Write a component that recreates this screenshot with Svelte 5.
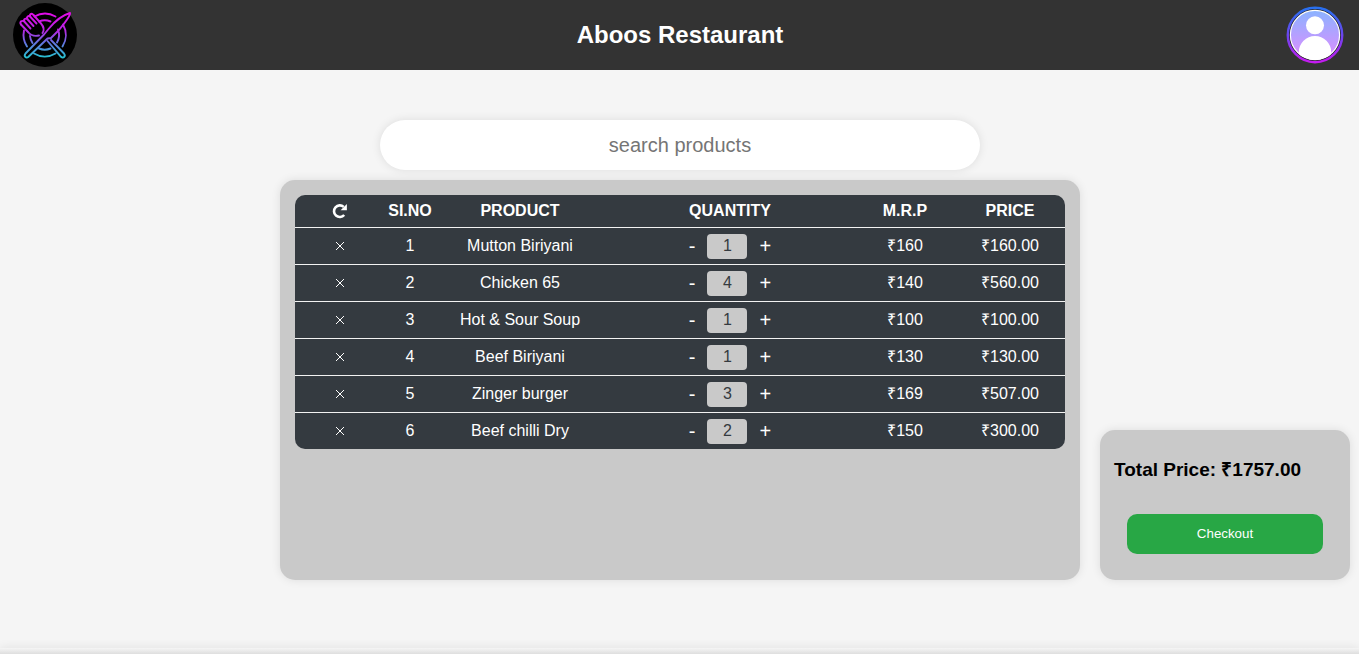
<script>
  let items = $state([
    { name: 'Mutton Biriyani', qty: 1, mrp: 160 },
    { name: 'Chicken 65', qty: 4, mrp: 140 },
    { name: 'Hot & Sour Soup', qty: 1, mrp: 100 },
    { name: 'Beef Biriyani', qty: 1, mrp: 130 },
    { name: 'Zinger burger', qty: 3, mrp: 169 },
    { name: 'Beef chilli Dry', qty: 2, mrp: 150 }
  ]);
  let total = $derived(items.reduce((sum, item) => sum + item.qty * item.mrp, 0));

  function remove(index) {
    items.splice(index, 1);
  }
  function change(item, step) {
    item.qty = Math.max(1, item.qty + step);
  }
</script>

<div class="page">
  <header>
    <svg class="logo" viewBox="0 0 64 64" aria-hidden="true">
      <defs>
        <linearGradient id="neon" gradientUnits="userSpaceOnUse" x1="0" y1="10" x2="0" y2="55">
          <stop offset="0" stop-color="#e00be8" />
          <stop offset="0.4" stop-color="#b528e2" />
          <stop offset="0.65" stop-color="#6670e0" />
          <stop offset="1" stop-color="#25c3cf" />
        </linearGradient>
      </defs>
      <circle cx="32" cy="32" r="32" fill="#000" />
      <g fill="none" stroke="url(#neon)" stroke-width="1.9" stroke-linecap="round" stroke-linejoin="round">
        <path d="M21.500 13.500A21.300 21.300 0 0 1 42.500 13.500" />
        <path d="M50 21.500A21.300 21.300 0 0 1 49.500 43.500" />
        <path d="M42.500 50.500A21.300 21.300 0 0 1 21 50.500" />
        <path d="M14 43.500A21.300 21.300 0 0 1 11 27.500" />
        <path d="M26 18.500A15 15 0 0 1 37.500 18.500" />
        <path d="M45 26.500A15 15 0 0 1 44 39.500" />
        <path d="M37.500 45.500A15 15 0 0 1 26 45.500" />
        <path d="M19.500 40A15 15 0 0 1 17 33" />
        <path d="M57 10C50 12 42 18 35.500 26L31 31.500L12.500 50.500C10.500 53 13 56 15.500 53.800L34.500 35.500L38 35L45 28C50 22 55.500 16 57 11Z" />
        <path d="M20.500 12L28 20.500C31 24 31.500 27 29.500 30" />
        <path d="M8 21.500L15.500 29.500C18 32.500 21.500 33.500 26 32.500" />
        <path d="M20.500 12C18.500 9.500 16 11.500 17.500 14L23.500 20.500M17.500 14C15.500 12 13 14 14.700 16.500L20.500 23M14.700 16.500C12.500 14.500 10 16.500 11.700 19L17.500 25.500M11.700 19C9 16.500 6 19 8 21.500" />
        <path d="M34.500 38L48 53.800C50.500 56 53 53 51 50.500L38 37" />
      </g>
    </svg>
    <h1>Aboos Restaurant</h1>
    <svg class="avatar" viewBox="0 0 58 58" aria-hidden="true">
      <defs>
        <linearGradient id="ring" x1="0" y1="0" x2="0" y2="1">
          <stop offset="0" stop-color="#2870ee" />
          <stop offset="0.5" stop-color="#6a45ee" />
          <stop offset="1" stop-color="#c41bf0" />
        </linearGradient>
        <linearGradient id="sky" x1="0" y1="0" x2="0" y2="1">
          <stop offset="0" stop-color="#8bb3ff" />
          <stop offset="1" stop-color="#e08cff" />
        </linearGradient>
        <clipPath id="disc"><circle cx="29" cy="29" r="25" /></clipPath>
      </defs>
      <circle cx="29" cy="29" r="27.200" fill="#222" stroke="url(#ring)" stroke-width="2.500" />
      <circle cx="29" cy="29" r="24.600" fill="url(#sky)" stroke="#fff" stroke-width="1.200" />
      <g fill="#fff" clip-path="url(#disc)">
        <circle cx="29" cy="19.300" r="9" />
        <path d="M12.800 58V46.300a16.200 16.200 0 0 1 32.400 0v12z" />
      </g>
    </svg>
  </header>

  <main>
    <input class="search" type="text" placeholder="search products" />
    <div class="content">
      <section class="cart">
        <table>
          <colgroup>
            <col class="c-remove" /><col class="c-no" /><col class="c-name" />
            <col class="c-qty" /><col class="c-mrp" /><col class="c-price" />
          </colgroup>
          <thead>
            <tr>
              <th>
                <svg class="reload" viewBox="0 0 16 16" aria-label="Reset">
                  <path d="M11.700 3.900A5.800 5.800 0 1 0 12.200 12" fill="none" stroke="#fff" stroke-width="2.600" />
                  <path d="M14.900 1v6.300H8.600z" fill="#fff" />
                </svg>
              </th>
              <th>SI.NO</th><th>PRODUCT</th><th>QUANTITY</th><th>M.R.P</th><th>PRICE</th>
            </tr>
          </thead>
          <tbody>
            {#each items as item, i}
              <tr>
                <td>
                  <button class="remove" aria-label="Remove" onclick={() => remove(i)}>
                    <svg viewBox="0 0 10 10"><path d="M1 1L9 9M9 1L1 9" stroke="#fff" stroke-width="1" /></svg>
                  </button>
                </td>
                <td>{i + 1}</td>
                <td>{item.name}</td>
                <td>
                  <div class="stepper">
                    <button onclick={() => change(item, -1)}>-</button>
                    <span class="count">{item.qty}</span>
                    <button onclick={() => change(item, 1)}>+</button>
                  </div>
                </td>
                <td>₹{item.mrp}</td>
                <td>₹{(item.qty * item.mrp).toFixed(2)}</td>
              </tr>
            {/each}
          </tbody>
        </table>
      </section>
      <aside>
        <h3>Total Price: ₹{total.toFixed(2)}</h3>
        <button class="checkout">Checkout</button>
      </aside>
    </div>
  </main>
  <footer></footer>
</div>

<style>
  :global(body) {
    margin: 0;
    background: #f5f5f5;
    font-family: "Liberation Sans", Arial, sans-serif;
  }
  .page {
    display: flex;
    flex-direction: column;
    height: 654px;
    overflow: hidden;
  }
  header {
    display: flex;
    align-items: center;
    justify-content: space-between;
    box-sizing: border-box;
    height: 70px;
    flex: none;
    padding: 0 15px 0 13px;
    background: #333;
    color: #fff;
  }
  h1 {
    margin: 0 3px 0 0;
    font-size: 24px;
    line-height: 28px;
  }
  .logo {
    width: 64px;
    height: 64px;
  }
  .avatar {
    width: 58px;
    height: 58px;
  }
  main {
    display: flex;
    flex-direction: column;
    align-items: center;
    gap: 10px;
    flex: none;
    height: 528px;
    padding-top: 50px;
    box-sizing: content-box;
  }
  .search {
    box-sizing: border-box;
    width: 600px;
    height: 50px;
    flex: none;
    margin-left: 1px;
    padding: 0 20px;
    border: none;
    border-radius: 25px;
    outline: none;
    background: #fff;
    box-shadow: 0 0 10px rgba(0, 0, 0, 0.1);
    font: 20px "Liberation Sans", Arial, sans-serif;
    text-align: center;
  }
  .search::placeholder {
    color: #757575;
  }
  .content {
    display: flex;
    align-items: flex-end;
    align-self: stretch;
    gap: 20px;
    padding-left: 280px;
  }
  .cart {
    box-sizing: border-box;
    width: 800px;
    height: 400px;
    padding: 15px;
    border-radius: 15px;
    background: #c9c9c9;
    box-shadow: 0 0 10px rgba(0, 0, 0, 0.1);
  }
  table {
    width: 770px;
    table-layout: fixed;
    border-spacing: 0;
    border-radius: 10px;
    background: #343a40;
    color: #fff;
    font-size: 16px;
    text-align: center;
  }
  .c-remove { width: 90px; }
  .c-no { width: 50px; }
  .c-name { width: 170px; }
  .c-qty { width: 250px; }
  .c-mrp { width: 100px; }
  .c-price { width: 110px; }
  th, td {
    box-sizing: border-box;
    height: 37px;
    padding: 0;
    border-bottom: 1px solid #f2f2f2;
    vertical-align: middle;
    line-height: 18px;
  }
  th {
    height: 33px;
    padding-bottom: 1px;
  }
  tbody tr:last-child td {
    height: 36px;
    border-bottom: none;
  }
  .reload {
    display: block;
    width: 16px;
    height: 16px;
    margin: 1px auto 0;
  }
  td button {
    padding: 0 0 2px;
    border: none;
    background: none;
    color: #fff;
    font: 20px/22px "Liberation Sans", Arial, sans-serif;
  }
  .remove {
    display: block;
    width: 10px;
    height: 10px;
    margin: 0 auto;
    padding: 0;
  }
  .remove svg {
    display: block;
    width: 10px;
    height: 10px;
  }
  .stepper {
    display: flex;
    align-items: center;
    justify-content: center;
    gap: 12px;
    padding-top: 1px;
  }
  .count {
    width: 40px;
    height: 25px;
    border-radius: 4px;
    background: #c9c9c9;
    color: #343a40;
    line-height: 24px;
  }
  aside {
    display: flex;
    flex-direction: column;
    align-items: center;
    box-sizing: border-box;
    width: 250px;
    height: 150px;
    padding: 29px 14px 0;
    border-radius: 15px;
    background: #c9c9c9;
    box-shadow: 0 0 10px rgba(0, 0, 0, 0.1);
  }
  h3 {
    align-self: flex-start;
    margin: 0 0 33px;
    font-size: 19px;
    line-height: 22px;
  }
  .checkout {
    width: 196px;
    height: 40px;
    padding: 0 0 2px;
    border: none;
    border-radius: 10px;
    background: #28a745;
    color: #fff;
    font: 13.333px "Liberation Sans", Arial, sans-serif;
  }
  footer {
    flex: none;
    height: 6px;
    background: linear-gradient(#f5f5f5, #dedede);
    box-shadow: 0 0 10px rgba(0, 0, 0, 0.1);
  }
</style>
